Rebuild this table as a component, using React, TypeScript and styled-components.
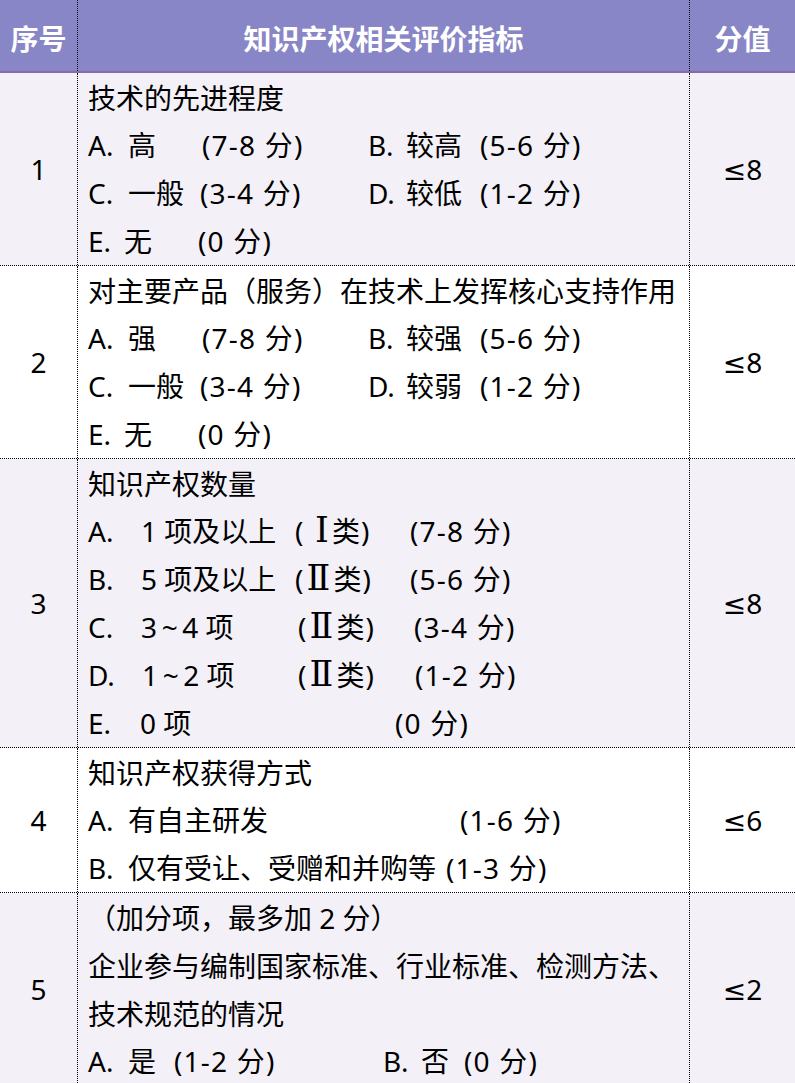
import React from 'react';
import styled, { createGlobalStyle } from 'styled-components';

const GlobalStyle = createGlobalStyle`
  html, body {
    margin: 0;
    padding: 0;
    overflow: hidden;
    background: #ffffff;
  }
`;

const FONT = `"Noto Sans", "Noto Sans CJK SC", sans-serif`;

const Table = styled.div`
  width: 795px;
  font-family: ${FONT};
  font-size: 28px;
  color: #000;
`;

const Row = styled.div<{ $alt?: boolean }>`
  display: grid;
  grid-template-columns: 78px 611px 106px;
  background: ${p => (p.$alt ? '#f3f1f7' : '#ffffff')};
  border-bottom: 1px dotted #000;
`;

const HeaderRow = styled.div`
  display: grid;
  grid-template-columns: 78px 611px 106px;
  height: 71px;
  background: #8886c6;
  border-bottom: 2px solid #8b68a9;
`;

const HeaderCell = styled.div<{ $divider?: 'left' | 'right' }>`
  display: flex;
  align-items: center;
  justify-content: center;
  padding-top: 4px;
  box-sizing: border-box;
  color: #fff;
  font-family: "Noto Sans CJK SC", sans-serif;
  font-weight: 700;
  font-size: 28px;
  border-right: ${p => (p.$divider === 'right' ? '1px dotted #000' : 'none')};
  border-left: ${p => (p.$divider === 'left' ? '1px dotted #000' : 'none')};
`;

const NumCell = styled.div`
  display: flex;
  align-items: center;
  justify-content: center;
  border-right: 1px dotted #000;
`;

const ScoreCell = styled.div`
  display: flex;
  align-items: center;
  justify-content: center;
  border-left: 1px dotted #000;
  font-family: "Noto Sans", "DejaVu Sans", sans-serif;
`;

const ContentCell = styled.div`
  padding-left: 10px;
  display: flex;
  flex-direction: column;
`;

const Line = styled.div`
  height: 48px;
  display: flex;
  align-items: center;
  white-space: pre;
`;

const Seg = styled.span<{ $w?: number; $spaced?: boolean }>`
  flex-shrink: 0;
  line-height: 48px;
  width: ${p => (p.$w !== undefined ? `${p.$w}px` : 'auto')};
  letter-spacing: ${p => (p.$spaced ? '1.2px' : 'normal')};
`;

// roman numerals with serif bars, like the original document
const Roman = styled.span`
  font-family: "DejaVu Serif", serif;
  font-size: 35px;
  line-height: 1;
  letter-spacing: 0;
  margin: 0 3px 0 2px;
`;

// each option line is a list of [start offset, text]
type Stop = [number, string];

const renderText = (text: string) =>
  text.split(/([ⅠⅡ])/).map((part, i) =>
    part === 'Ⅰ' || part === 'Ⅱ' ? <Roman key={i}>{part}</Roman> : part
  );

const OptionLine = ({ stops }: { stops: Stop[] }) => (
  <Line>
    {stops.map(([x, text], i) => {
      const next = stops[i + 1];
      return (
        <Seg key={i} $w={next ? next[0] - x : undefined} $spaced={text.startsWith('(')}>
          {renderText(text)}
        </Seg>
      );
    })}
  </Line>
);

type Item = {
  no: string;
  score: string;
  alt?: boolean;
  lines: (string | Stop[])[];
};

const items: Item[] = [
  {
    no: '1',
    score: '≤8',
    alt: true,
    lines: [
      '技术的先进程度',
      [[0, 'A.'], [40, '高'], [114, '(7-8 分)'], [280, 'B.'], [318, '较高'], [392, '(5-6 分)']],
      [[0, 'C.'], [40, '一般'], [112, '(3-4 分)'], [280, 'D.'], [318, '较低'], [392, '(1-2 分)']],
      [[0, 'E.'], [36, '无'], [110, '(0 分)']],
    ],
  },
  {
    no: '2',
    score: '≤8',
    lines: [
      '对主要产品（服务）在技术上发挥核心支持作用',
      [[0, 'A.'], [40, '强'], [114, '(7-8 分)'], [280, 'B.'], [318, '较强'], [392, '(5-6 分)']],
      [[0, 'C.'], [40, '一般'], [112, '(3-4 分)'], [280, 'D.'], [318, '较弱'], [392, '(1-2 分)']],
      [[0, 'E.'], [36, '无'], [110, '(0 分)']],
    ],
  },
  {
    no: '3',
    score: '≤8',
    alt: true,
    lines: [
      '知识产权数量',
      [[0, 'A.'], [53, '1 项及以上'], [207, '( Ⅰ类)'], [322, '(7-8 分)']],
      [[0, 'B.'], [53, '5 项及以上'], [207, '(Ⅱ类)'], [322, '(5-6 分)']],
      [[0, 'C.'], [53, '3\u2009~\u20094 项'], [210, '(Ⅱ类)'], [326, '(3-4 分)']],
      [[0, 'D.'], [54, '1\u2009~\u20092 项'], [210, '(Ⅱ类)'], [327, '(1-2 分)']],
      [[0, 'E.'], [52, '0 项'], [307, '(0 分)']],
    ],
  },
  {
    no: '4',
    score: '≤6',
    lines: [
      '知识产权获得方式',
      [[0, 'A.'], [40, '有自主研发'], [372, '(1-6 分)']],
      [[0, 'B.'], [40, '仅有受让、受赠和并购等'], [358, '(1-3 分)']],
    ],
  },
  {
    no: '5',
    score: '≤2',
    alt: true,
    lines: [
      '（加分项，最多加 2 分）',
      '企业参与编制国家标准、行业标准、检测方法、',
      '技术规范的情况',
      [[0, 'A.'], [40, '是'], [86, '(1-2 分)'], [295, 'B.'], [333, '否'], [376, '(0 分)']],
    ],
  },
];

export default function App() {
  return (
    <>
      <GlobalStyle />
      <Table>
        <HeaderRow>
          <HeaderCell $divider="right">序号</HeaderCell>
          <HeaderCell>知识产权相关评价指标</HeaderCell>
          <HeaderCell $divider="left">分值</HeaderCell>
        </HeaderRow>
        {items.map(item => (
          <Row key={item.no} $alt={item.alt}>
            <NumCell>{item.no}</NumCell>
            <ContentCell>
              {item.lines.map((line, i) =>
                typeof line === 'string' ? (
                  <Line key={i}>{line}</Line>
                ) : (
                  <OptionLine key={i} stops={line} />
                )
              )}
            </ContentCell>
            <ScoreCell>{item.score}</ScoreCell>
          </Row>
        ))}
      </Table>
    </>
  );
}
